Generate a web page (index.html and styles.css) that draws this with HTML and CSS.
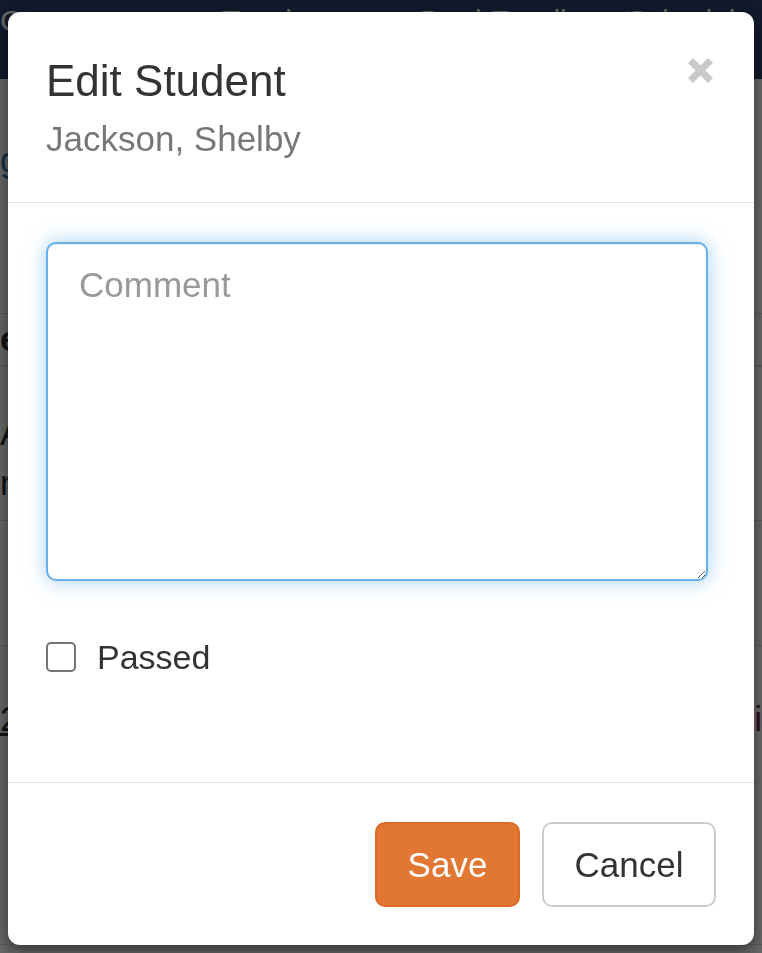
FILE: index.html
```html
<!DOCTYPE html>
<html lang="en">
<head>
<meta charset="utf-8">
<title>Edit Student</title>
<link rel="stylesheet" href="styles.css">
</head>
<body>
<div class="page">
  <nav class="navbar">
    <span class="brand">C</span>
    <a class="nav-link">Teachers</a>
    <a class="nav-link">Dual Enrollment</a>
    <a class="nav-link">Schedule</a>
  </nav>
  <main class="content">
    <div class="page-head"><a class="back-link">g</a></div>
    <table class="roster">
      <thead>
        <tr><th>e</th><th class="right"></th></tr>
      </thead>
      <tbody>
        <tr class="row-a"><td>A<br>n</td><td class="right"></td></tr>
        <tr class="row-b"><td></td><td class="right"></td></tr>
        <tr class="row-c"><td><a class="num-link">2</a></td><td class="right"><a class="act-link">i</a></td></tr>
      </tbody>
    </table>
  </main>
</div>
<div class="backdrop"></div>
<div class="modal" role="dialog">
  <div class="modal-header">
    <div class="titles">
      <h4 class="modal-title">Edit Student</h4>
      <div class="modal-subtitle">Jackson, Shelby</div>
    </div>
    <button class="close" type="button" aria-label="Close">
      <svg width="25" height="25" viewBox="0 0 25 25"><path d="M2.5 2.5 L22.5 22.5 M22.5 2.5 L2.5 22.5" stroke="#c9c9c9" stroke-width="7" fill="none"/></svg>
    </button>
  </div>
  <div class="modal-body">
    <textarea class="comment" placeholder="Comment"></textarea>
    <label class="check-row"><input type="checkbox" class="check"><span>Passed</span></label>
  </div>
  <div class="modal-footer">
    <button class="btn btn-save" type="button">Save</button>
    <button class="btn btn-cancel" type="button">Cancel</button>
  </div>
</div>
</body>
</html>
```
FILE: styles.css
```css
html, body {
  margin: 0;
  padding: 0;
  height: 100%;
  overflow: hidden;
}
body {
  background: #fff;
  font-family: "Liberation Sans", Arial, sans-serif;
  color: #333;
}
.navbar {
  height: 79px;
  background: #2b416e;
  display: grid;
  grid-template-columns: 222px 198px 207px auto;
  align-items: start;
  padding-top: 6px;
  box-sizing: border-box;
  font-size: 30px;
  line-height: 30px;
  color: #fff;
}
.brand { padding-left: 0; }
.nav-link { color: #fff; white-space: nowrap; }

.content {
  font-size: 35px;
  line-height: 50px;
}
.page-head {
  height: 234px;
  padding-top: 56px;
  box-sizing: border-box;
}
.back-link { color: #337ab7; }
.roster {
  width: 100%;
  border-collapse: collapse;
}
.roster th, .roster td {
  padding: 0;
  text-align: left;
  vertical-align: top;
}
.roster th {
  border-top: 1px solid #ddd;
  border-bottom: 2px solid #ddd;
  height: 51px;
  font-weight: bold;
}
.roster td { border-bottom: 1px solid #ddd; }
.roster .right { text-align: right; }
.row-a td { height: 112px; padding-top: 41px; }
.row-b td { height: 124px; }
.row-c td { height: 250px; padding-top: 48px; }
.num-link { color: #333; text-decoration: underline; }
.act-link { color: #6a2a55; }

.backdrop {
  position: fixed;
  inset: 0;
  background: rgba(0, 0, 0, 0.6);
}

.modal {
  position: fixed;
  top: 12px;
  left: 8px;
  width: 746px;
  background: #fff;
  border-radius: 12px;
  box-shadow: 0 5px 15px rgba(0, 0, 0, 0.5);
  color: #333;
}
.modal-header {
  display: flex;
  justify-content: space-between;
  align-items: flex-start;
  padding: 45px 41px 38px 38px;
  border-bottom: 1px solid #e5e5e5;
}
.modal-title {
  margin: 0;
  font-size: 44px;
  line-height: 48px;
  font-weight: normal;
  color: #333;
}
.modal-subtitle {
  margin-top: 9px;
  font-size: 35px;
  line-height: 50px;
  color: #777;
}
.close {
  margin-top: 1px;
  padding: 0;
  border: 0;
  background: none;
  width: 25px;
  height: 25px;
  display: block;
}
.close svg { display: block; }

.modal-body {
  padding: 39px 38px 110px;
  display: flex;
  flex-direction: column;
  align-items: flex-start;
}
.comment {
  width: 662px;
  height: 339px;
  box-sizing: border-box;
  margin: 0;
  padding: 16px 31px;
  border: 2px solid #66afe9;
  border-radius: 10px;
  box-shadow: inset 0 1px 1px rgba(0, 0, 0, 0.075), 0 0 20px rgba(102, 175, 233, 0.6);
  outline: none;
  font-family: "Liberation Sans", Arial, sans-serif;
  font-size: 35px;
  line-height: 50px;
  color: #555;
  resize: vertical;
}
.comment::placeholder { color: #999; }
.check-row {
  margin-top: 61px;
  display: flex;
  align-items: center;
  gap: 21px;
  height: 30px;
  font-size: 34px;
  line-height: 30px;
  color: #333;
}
.check {
  appearance: none;
  -webkit-appearance: none;
  margin: 0;
  width: 30px;
  height: 30px;
  box-sizing: border-box;
  border: 2px solid #767676;
  border-radius: 5px;
  background: #fff;
}

.modal-footer {
  border-top: 1px solid #e5e5e5;
  padding: 39px 38px 38px;
  display: flex;
  justify-content: flex-end;
  gap: 22px;
}
.btn {
  height: 85px;
  box-sizing: border-box;
  padding: 0 31px;
  border-radius: 10px;
  font-family: "Liberation Sans", Arial, sans-serif;
  font-size: 35px;
  line-height: 50px;
  display: flex;
  align-items: center;
  justify-content: center;
}
.btn-save {
  width: 145px;
  background: #e17733;
  border: 2px solid #dd6b25;
  color: #fff;
}
.btn-cancel {
  width: 174px;
  background: #fff;
  border: 2px solid #ccc;
  color: #333;
}
```
